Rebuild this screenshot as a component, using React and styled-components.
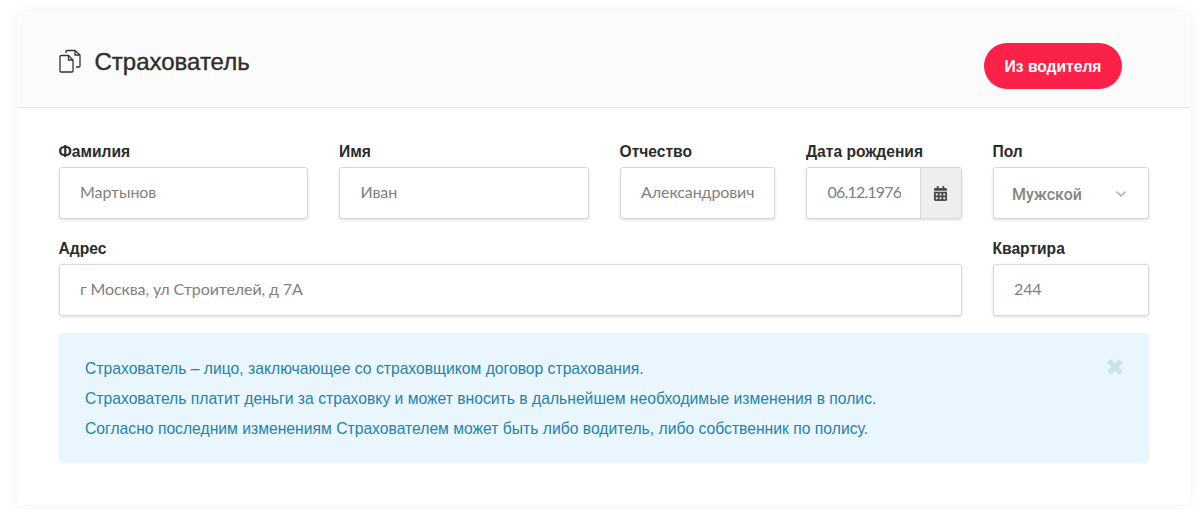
import React from "react";
import styled, { createGlobalStyle } from "styled-components";
import { FaCalendarAlt } from "react-icons/fa";
import { FiChevronDown } from "react-icons/fi";

const GlobalStyle = createGlobalStyle`
  html, body {
    margin: 0;
    background: #ffffff;
    font-family: "Liberation Sans", Arial, sans-serif;
  }
`;

const Page = styled.div`
  width: 1200px;
  height: 516px;
  padding: 12px 10px 11px 17px;
  box-sizing: border-box;
  overflow: hidden;
`;

const Card = styled.section`
  height: 493px;
  background: #fff;
  border-radius: 4px;
  box-shadow: 0 0 12px rgba(0, 0, 0, 0.06);
`;

const Header = styled.header`
  height: 96px;
  box-sizing: border-box;
  padding: 0 68px 0 41.5px;
  display: flex;
  align-items: center;
  background: #fbfbfb;
  border-bottom: 1px solid #e8e8e8;
  border-radius: 4px 4px 0 0;
`;

const TitleIcon = styled.svg`
  width: 23px;
  height: 24px;
  margin-right: 13px;
  margin-top: 2px;
  flex: none;
`;

const Title = styled.h2`
  flex: 1;
  margin: 4px 0 0;
  font-size: 24px;
  font-weight: 400;
  color: #2f2f2f;
  -webkit-text-stroke: 0.4px #2f2f2f;
`;

const DriverButton = styled.button`
  width: 138px;
  height: 46px;
  margin-top: 12px;
  padding: 3px 0 0;
  border: 0;
  border-radius: 23px;
  background: #fc2148;
  color: #fff;
  font-family: inherit;
  font-size: 15.6px;
  font-weight: 700;
`;

const Body = styled.div`
  padding: 34px 41.5px 0;
`;

const FormGrid = styled.div`
  display: grid;
  grid-template-columns: 249.5px 249.5px 155.5px 155.5px 156px;
  column-gap: 31px;
  row-gap: 20px;
`;

const Field = styled.label`
  display: block;
  grid-column: ${(p) => p.$span || "auto"};
`;

const LabelText = styled.span`
  display: block;
  height: 25px;
  font-size: 15.6px;
  line-height: 20px;
  font-weight: 700;
  color: #2b2b2b;
`;

const InputBox = styled.div`
  height: 52px;
  box-sizing: border-box;
  display: flex;
  align-items: stretch;
  border: 1px solid #d8d8d8;
  border-radius: 3px;
  background: #fff;
  box-shadow: 0 1px 3px rgba(0, 0, 0, 0.14);
  overflow: hidden;
`;

const TextInput = styled.input`
  flex: 1;
  min-width: 0;
  border: 0;
  outline: 0;
  margin-bottom: 3px;
  padding: 0 ${(p) => (p.$clipped ? "19px" : "0")} 0 20.5px;
  background: transparent;
  font-family: "Lato", "Open Sans", sans-serif;
  font-size: 16px;
  letter-spacing: ${(p) => (p.$clipped ? "-0.8px" : "-0.1px")};
  color: #808080;
`;

const CalendarAddon = styled.span`
  width: 40px;
  flex: none;
  display: flex;
  align-items: center;
  justify-content: center;
  background: #eeeeee;
  border-left: 1px solid #d8d8d8;
  color: #4d4d4d;
  font-size: 15px;
`;

const SelectBox = styled(InputBox)`
  align-items: center;
  justify-content: space-between;
  padding: 2px 19px 0 18.5px;
  font-family: "Roboto", sans-serif;
  font-size: 16px;
  font-weight: 500;
  color: #858585;
  svg {
    color: #a9a9a9;
    font-size: 16px;
  }
`;

const Alert = styled.div`
  position: relative;
  margin-top: 17px;
  height: 130px;
  box-sizing: border-box;
  padding: 21px 26.5px;
  background: #e9f6fe;
  border-radius: 3px;
  color: #2581ab;
  font-size: 15.7px;
  line-height: 30px;
`;

const AlertLine = styled.p`
  margin: 0;
`;

const CloseIcon = styled.svg`
  position: absolute;
  top: 26px;
  right: 26px;
  width: 16px;
  height: 16px;
`;

export default function App() {
  return (
    <Page>
      <GlobalStyle />
      <Card>
        <Header>
          <TitleIcon viewBox="0 0 23 24" fill="none" stroke="#333" strokeWidth="1.3">
            <path d="M1 7.5 a1 1 0 0 1 1-1 h7.5 l4.5 4.5 v11 a1 1 0 0 1-1 1 H2 a1 1 0 0 1-1-1 Z" />
            <path d="M9.5 6.5 v4.5 h4.5" />
            <path d="M7 4 V2.5 a1 1 0 0 1 1-1 h8 l5 4.5 v11 a1 1 0 0 1-1 1 h-3" />
            <path d="M16 1.5 v4.5 h5" />
          </TitleIcon>
          <Title>Страхователь</Title>
          <DriverButton type="button">Из водителя</DriverButton>
        </Header>
        <Body>
          <FormGrid>
            <Field>
              <LabelText>Фамилия</LabelText>
              <InputBox>
                <TextInput readOnly value="Мартынов" />
              </InputBox>
            </Field>
            <Field>
              <LabelText>Имя</LabelText>
              <InputBox>
                <TextInput readOnly value="Иван" />
              </InputBox>
            </Field>
            <Field>
              <LabelText>Отчество</LabelText>
              <InputBox>
                <TextInput readOnly value="Александрович" />
              </InputBox>
            </Field>
            <Field>
              <LabelText>Дата рождения</LabelText>
              <InputBox>
                <TextInput readOnly $clipped value="06.12.1976" />
                <CalendarAddon>
                  <FaCalendarAlt />
                </CalendarAddon>
              </InputBox>
            </Field>
            <Field>
              <LabelText>Пол</LabelText>
              <SelectBox>
                Мужской
                <FiChevronDown />
              </SelectBox>
            </Field>
            <Field $span="span 4">
              <LabelText>Адрес</LabelText>
              <InputBox>
                <TextInput readOnly value="г Москва, ул Строителей, д 7А" />
              </InputBox>
            </Field>
            <Field>
              <LabelText>Квартира</LabelText>
              <InputBox>
                <TextInput readOnly value="244" />
              </InputBox>
            </Field>
          </FormGrid>
          <Alert>
            <AlertLine>Страхователь – лицо, заключающее со страховщиком договор страхования.</AlertLine>
            <AlertLine>Страхователь платит деньги за страховку и может вносить в дальнейшем необходимые изменения в полис.</AlertLine>
            <AlertLine>Согласно последним изменениям Страхователем может быть либо водитель, либо собственник по полису.</AlertLine>
            <CloseIcon viewBox="0 0 16 16" stroke="#c9e2ee" strokeWidth="5">
              <path d="M2 2 L14 14 M14 2 L2 14" />
            </CloseIcon>
          </Alert>
        </Body>
      </Card>
    </Page>
  );
}
